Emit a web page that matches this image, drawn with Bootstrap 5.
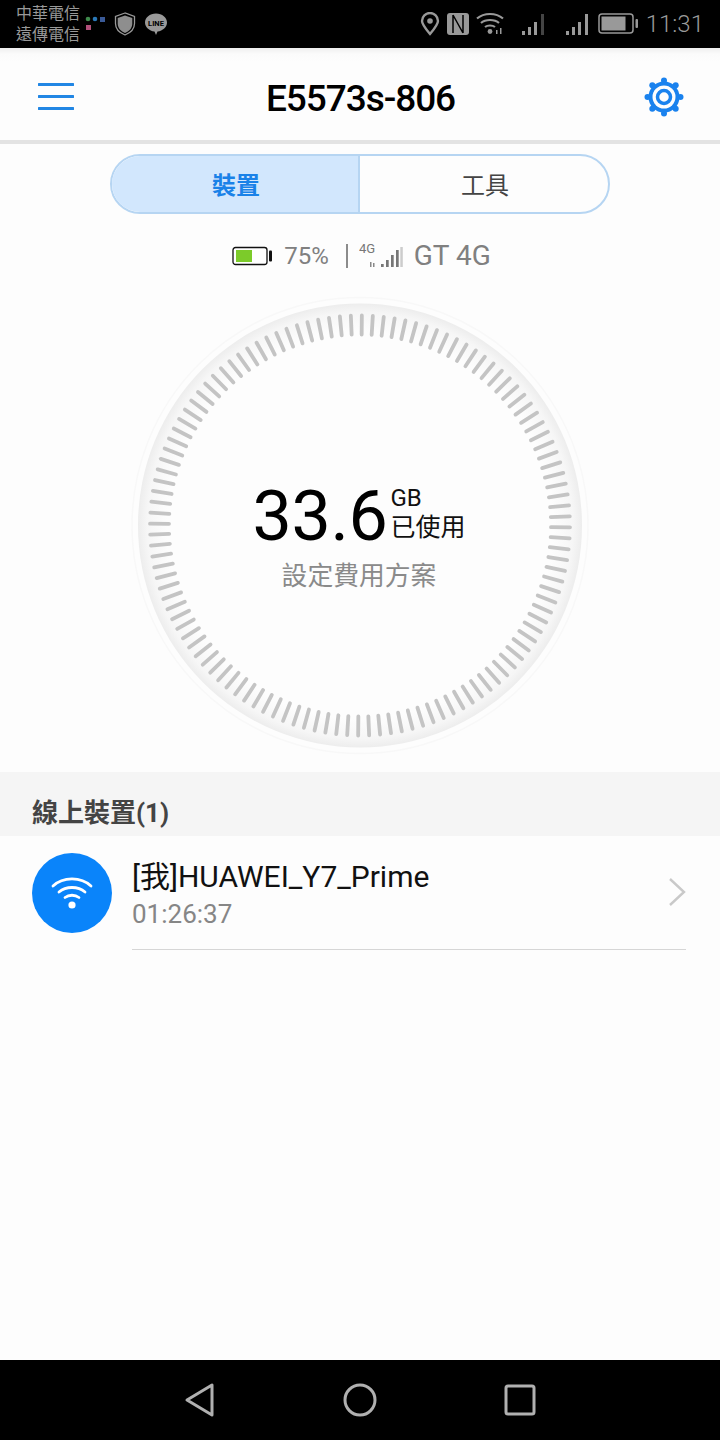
<!DOCTYPE html>
<html lang="zh-Hant">
<head>
<meta charset="utf-8">
<title>E5573s-806</title>
<link rel="stylesheet" href="https://cdn.jsdelivr.net/npm/bootstrap@5.3.0/dist/css/bootstrap.min.css">
<style>
html,body{margin:0;background:#fdfdfd}
body{width:720px;height:1440px;overflow:hidden;font-family:Roboto,"Noto Sans CJK TC",sans-serif}
.shell{height:1440px}
.sbar{height:48px;background:#000;color:#999}
.carriers{font-size:16px;line-height:21px;margin-left:16px;width:64px;padding-top:3px;height:48px}
.gapdots{margin-left:5px}
.gapshield{margin-left:7px}
.gapline{margin-left:8px}
.gapnfc{margin-left:7px}
.gapwifi{margin-left:6px}
.gapsig1{margin-left:16px}
.gapsig2{margin-left:20px}
.gapbatt{margin-left:9px}
.clock{font-size:24px;font-weight:300;color:#9a9a9a;margin:0 16px 0 6px;line-height:48px}
.appbar{height:92px;padding-top:6px;background:linear-gradient(#efefef 0,#fbfbfb 6px,#fdfdfd 14px)}
.burger{margin:0 0 2px 38px}
.ttl{font-size:37px;font-weight:500;color:#000;line-height:1;letter-spacing:-1.05px;margin-left:4px;padding-top:2px}
.gear{margin-right:35px}
.sepbar{height:4px;background:#e3e3e3}
.seg{width:500px;height:60px;margin-top:10px;border:2px solid #b6d5f2;border-radius:30px;overflow:hidden}
.segitem{width:50%;font-size:24px;line-height:1;color:#444;padding:3px 0 0 2px}
.segon{background:#d2e7fd;color:#1a82e8;font-weight:700;border-right:2px solid #b6d5f2}
.inforow{height:56px;margin-top:14px;padding-left:3px;color:#808080}
.pct{font-size:24px;margin-left:11px}
.vline{width:2px;height:24px;background:#8c8c8c;margin:0 11px 0 17px}
.net{font-size:28px;margin-left:11px}
.dialbox{width:720px;height:496px;margin-top:-8px}
.dialtext{top:0;left:0;right:0;bottom:0;padding:29px 2px 0 0}
.bignum{font-size:70px;line-height:60px;color:#000;font-weight:400;letter-spacing:-.4px}
.unit{font-size:25px;line-height:25px;color:#111;margin:-6px 0 0 3px}
.unitgb{font-size:24px;margin-bottom:4px}
.plan{font-size:25.8px;color:#8a8a8a;line-height:30px;margin-top:15px}
.grouphead{height:64px;background:#f5f5f5;padding:24px 0 0 32px;font-size:26px;font-weight:700;color:#444;line-height:35px}
.rowitem{height:114px;padding-top:17px}
.avatar{width:80px;height:80px;background:#0a84fa;margin-left:32px}
.rowbody{width:554px;margin-left:20px;height:97px;border-bottom:1px solid #d6d6d6}
.devname{font-size:30px;line-height:36px;color:#111;margin-top:6px}
.devtime{font-size:26px;line-height:32px;color:#868686;margin-top:3px}
.chev{top:24px;right:0}
.navb{height:80px;background:#000;margin-top:auto}
</style>
</head>
<body>
<div class="shell d-flex flex-column">
  <div class="sbar d-flex align-items-center">
    <div class="carriers flex-shrink-0">中華電信<br>遠傳電信</div>
    <svg class="gapdots flex-shrink-0" width="22" height="16" viewBox="0 0 22 16"><circle cx="3" cy="3" r="2.300" fill="#3f8a4c"/><circle cx="10" cy="3" r="2.300" fill="#2a78b8"/><rect x="15" y="1" width="5" height="5" fill="#3a5a98"/><rect x="1" y="9" width="5" height="5" fill="#b0507a"/></svg>
    <svg class="gapshield flex-shrink-0" width="22" height="24" viewBox="0 0 22 24"><path d="M11 1 1.500 4.500v7c0 6 4.500 9.500 9.500 11.500 5-2 9.500-5.500 9.500-11.500v-7z" fill="none" stroke="#999" stroke-width="1.300"/><path d="M11 3.500 3.700 6v5.500c0 4.800 3.400 7.800 7.300 9.400 3.900-1.600 7.300-4.600 7.300-9.400V6z" fill="#8e8e8e"/></svg>
    <svg class="gapline flex-shrink-0" width="24" height="24" viewBox="0 0 24 24"><path d="M12 1.500C5.800 1.500 1 5.500 1 10.500c0 4.600 4.200 8.400 9.500 9l1.500 3.500 1.500-3.500c5.300-.6 9.500-4.400 9.500-9 0-5-4.800-9-11-9z" fill="#999"/><text x="12" y="13.500" font-size="7.500" font-weight="700" text-anchor="middle" fill="#000" font-family="Roboto">LINE</text></svg>
    <div class="ms-auto d-flex align-items-center flex-shrink-0">
      <svg width="20" height="24" viewBox="0 0 20 24"><path d="M10 22C5 16 2 12.500 2 9a8 8 0 0 1 16 0c0 3.500-3 7-8 13z" fill="none" stroke="#999" stroke-width="2.400"/><circle cx="10" cy="9" r="2.800" fill="#999"/></svg>
      <svg class="gapnfc" width="22" height="22" viewBox="0 0 22 22"><rect width="22" height="22" rx="3" fill="#999"/><path d="M6 2v18M6 2l10 18M16 2v18" stroke="#000" stroke-width="1.500" fill="none"/></svg>
      <svg class="gapwifi" width="30" height="24" viewBox="0 0 30 24"><g fill="none" stroke="#999" stroke-width="2.200"><path d="M2 6.500c7-6 19-6 26 0"/><path d="M6 11c4.500-4 13.500-4 18 0"/><path d="M10 15c2.500-2 7.500-2 10 0"/></g><circle cx="15" cy="19.500" r="2.400" fill="#999"/><path d="M21 18h1.500v4H21zM25 16h1.500v6H25z" fill="#999"/></svg>
      <svg class="gapsig1" width="24" height="24" viewBox="0 0 24 24"><path d="M1 19h3v4H1zM7 15h3v8H7zM13 10h3v13h-3z" fill="#999"/><path d="M20 2h3v21h-3z" fill="#444"/></svg>
      <svg class="gapsig2" width="24" height="24" viewBox="0 0 24 24"><path d="M1 19h3v4H1zM7 15h3v8H7zM13 10h3v13h-3zM20 2h3v21h-3z" fill="#999"/></svg>
      <svg class="gapbatt" width="42" height="22" viewBox="0 0 42 22"><rect x="1" y="1" width="34" height="19" rx="3" fill="none" stroke="#999" stroke-width="1.500"/><rect x="3.500" y="3.500" width="24" height="14" fill="#999"/><rect x="37.500" y="6" width="2.500" height="9" rx="1" fill="#999"/></svg>
      <div class="clock">11:31</div>
    </div>
  </div>

  <div class="appbar d-flex align-items-center justify-content-between">
    <svg class="burger" width="36" height="28" viewBox="0 0 36 28"><path d="M1 2.500h34M1 14.500h34M1 26.500h34" stroke="#2186e4" stroke-width="3" stroke-linecap="round"/></svg>
    <div class="ttl">E5573s-806</div>
    <svg class="gear" width="42" height="42" viewBox="0 0 42 42">
      <g fill="#1a82ee">
        <circle cx="21" cy="4.500" r="3"/><circle cx="32.700" cy="9.300" r="3"/><circle cx="37.500" cy="21" r="3"/><circle cx="32.700" cy="32.700" r="3"/><circle cx="21" cy="37.500" r="3"/><circle cx="9.300" cy="32.700" r="3"/><circle cx="4.500" cy="21" r="3"/><circle cx="9.300" cy="9.300" r="3"/>
      </g>
      <circle cx="21" cy="21" r="15.500" fill="#1a82ee"/><circle cx="21" cy="21" r="11.500" fill="#fdfdfd"/><circle cx="21" cy="21" r="6.500" fill="none" stroke="#1a82ee" stroke-width="3.500"/>
    </svg>
  </div>
  <div class="sepbar"></div>

  <div class="seg d-flex mx-auto">
    <div class="segitem segon d-flex align-items-center justify-content-center">裝置</div>
    <div class="segitem d-flex align-items-center justify-content-center">工具</div>
  </div>

  <div class="inforow d-flex align-items-center justify-content-center">
    <svg width="41" height="20" viewBox="0 0 41 20"><rect x="1" y="1.500" width="34" height="17" rx="2.500" fill="#fff" stroke="#111" stroke-width="1.300"/><rect x="4" y="4" width="16" height="12" fill="#7ccb2a"/><rect x="37" y="4.500" width="3" height="11" rx="1" fill="#111"/></svg>
    <span class="pct">75%</span>
    <span class="vline"></span>
    <svg width="44" height="28" viewBox="0 0 44 28"><text x="0" y="11" font-size="13" fill="#777" font-family="Roboto">4G</text><path d="M11 20h1.500v5H11zM14 21h1.500v4H14z" fill="#888"/><path d="M22 22h2.700v3H22zM27 18h2.700v7H27zM32 13h2.700v12H32zM37 8h2.700v17H37z" fill="#777"/><path d="M41.300 5h2.500v20h-2.500z" fill="#ccc"/></svg>
    <span class="net">GT 4G</span>
  </div>

  <div class="dialbox position-relative d-flex justify-content-center align-items-center">
    <svg width="470" height="470" viewBox="-235 -236.500 470 470">
      <defs>
        <radialGradient id="ringfill" cx="0" cy="0" r="222" gradientUnits="userSpaceOnUse">
          <stop offset="0.87" stop-color="#fdfdfd"/>
          <stop offset="0.96" stop-color="#f6f6f6"/>
          <stop offset="1" stop-color="#ededed"/>
        </radialGradient>
      </defs>
      <circle r="228" fill="#fdfdfd" stroke="#f8f8f8" stroke-width="1.500"/>
      <circle r="222" fill="url(#ringfill)"/>
      <g id="ticks" stroke="#c4c4c4" stroke-width="3.800" stroke-linecap="round" transform="rotate(.5)"></g>
    </svg>
    <div class="dialtext position-absolute d-flex flex-column align-items-center justify-content-center">
      <div class="d-flex align-items-center">
        <div class="bignum">33.6</div>
        <div class="unit"><div class="unitgb">GB</div><div>已使用</div></div>
      </div>
      <div class="plan">設定費用方案</div>
    </div>
  </div>

  <div class="grouphead">線上裝置(1)</div>

  <div class="rowitem d-flex">
    <div class="avatar rounded-circle d-flex align-items-center justify-content-center flex-shrink-0">
      <svg width="42" height="34" viewBox="0 0 42 34"><g fill="none" stroke="#fff" stroke-width="2.800" stroke-linecap="round"><path d="M2 10C12 .5 30 .5 40 10"/><path d="M8 16c7-6 19-6 26 0"/><path d="M14 21.500c4-3 10-3 14 0"/></g><circle cx="21" cy="29" r="3.600" fill="#fff"/></svg>
    </div>
    <div class="rowbody position-relative">
      <div class="devname">[我]HUAWEI_Y7_Prime</div>
      <div class="devtime">01:26:37</div>
      <svg class="chev position-absolute" width="18" height="30" viewBox="0 0 18 30"><path d="M2 2l14 13L2 28" fill="none" stroke="#c9c9c9" stroke-width="2.400"/></svg>
    </div>
  </div>

  <div class="navb d-flex align-items-center justify-content-center flex-shrink-0">
    <svg width="360" height="36" viewBox="0 0 360 36"><g fill="none" stroke="#b0b0b0" stroke-width="3" stroke-linejoin="round"><path d="M32 3v30L7 18z"/><circle cx="180" cy="18" r="15"/><rect x="326" y="4" width="28" height="28" rx="2"/></g></svg>
  </div>
</div>
<script>
var g=document.getElementById('ticks'),s='';
for(var i=0;i<120;i++){var a=i*3*Math.PI/180,c=Math.cos(a),d=Math.sin(a);
s+='<line x1="'+(191*c).toFixed(2)+'" y1="'+(191*d).toFixed(2)+'" x2="'+(210*c).toFixed(2)+'" y2="'+(210*d).toFixed(2)+'"/>';}
g.innerHTML=s;
</script>
<script src="https://cdn.jsdelivr.net/npm/bootstrap@5.3.0/dist/js/bootstrap.bundle.min.js"></script>
</body>
</html>
